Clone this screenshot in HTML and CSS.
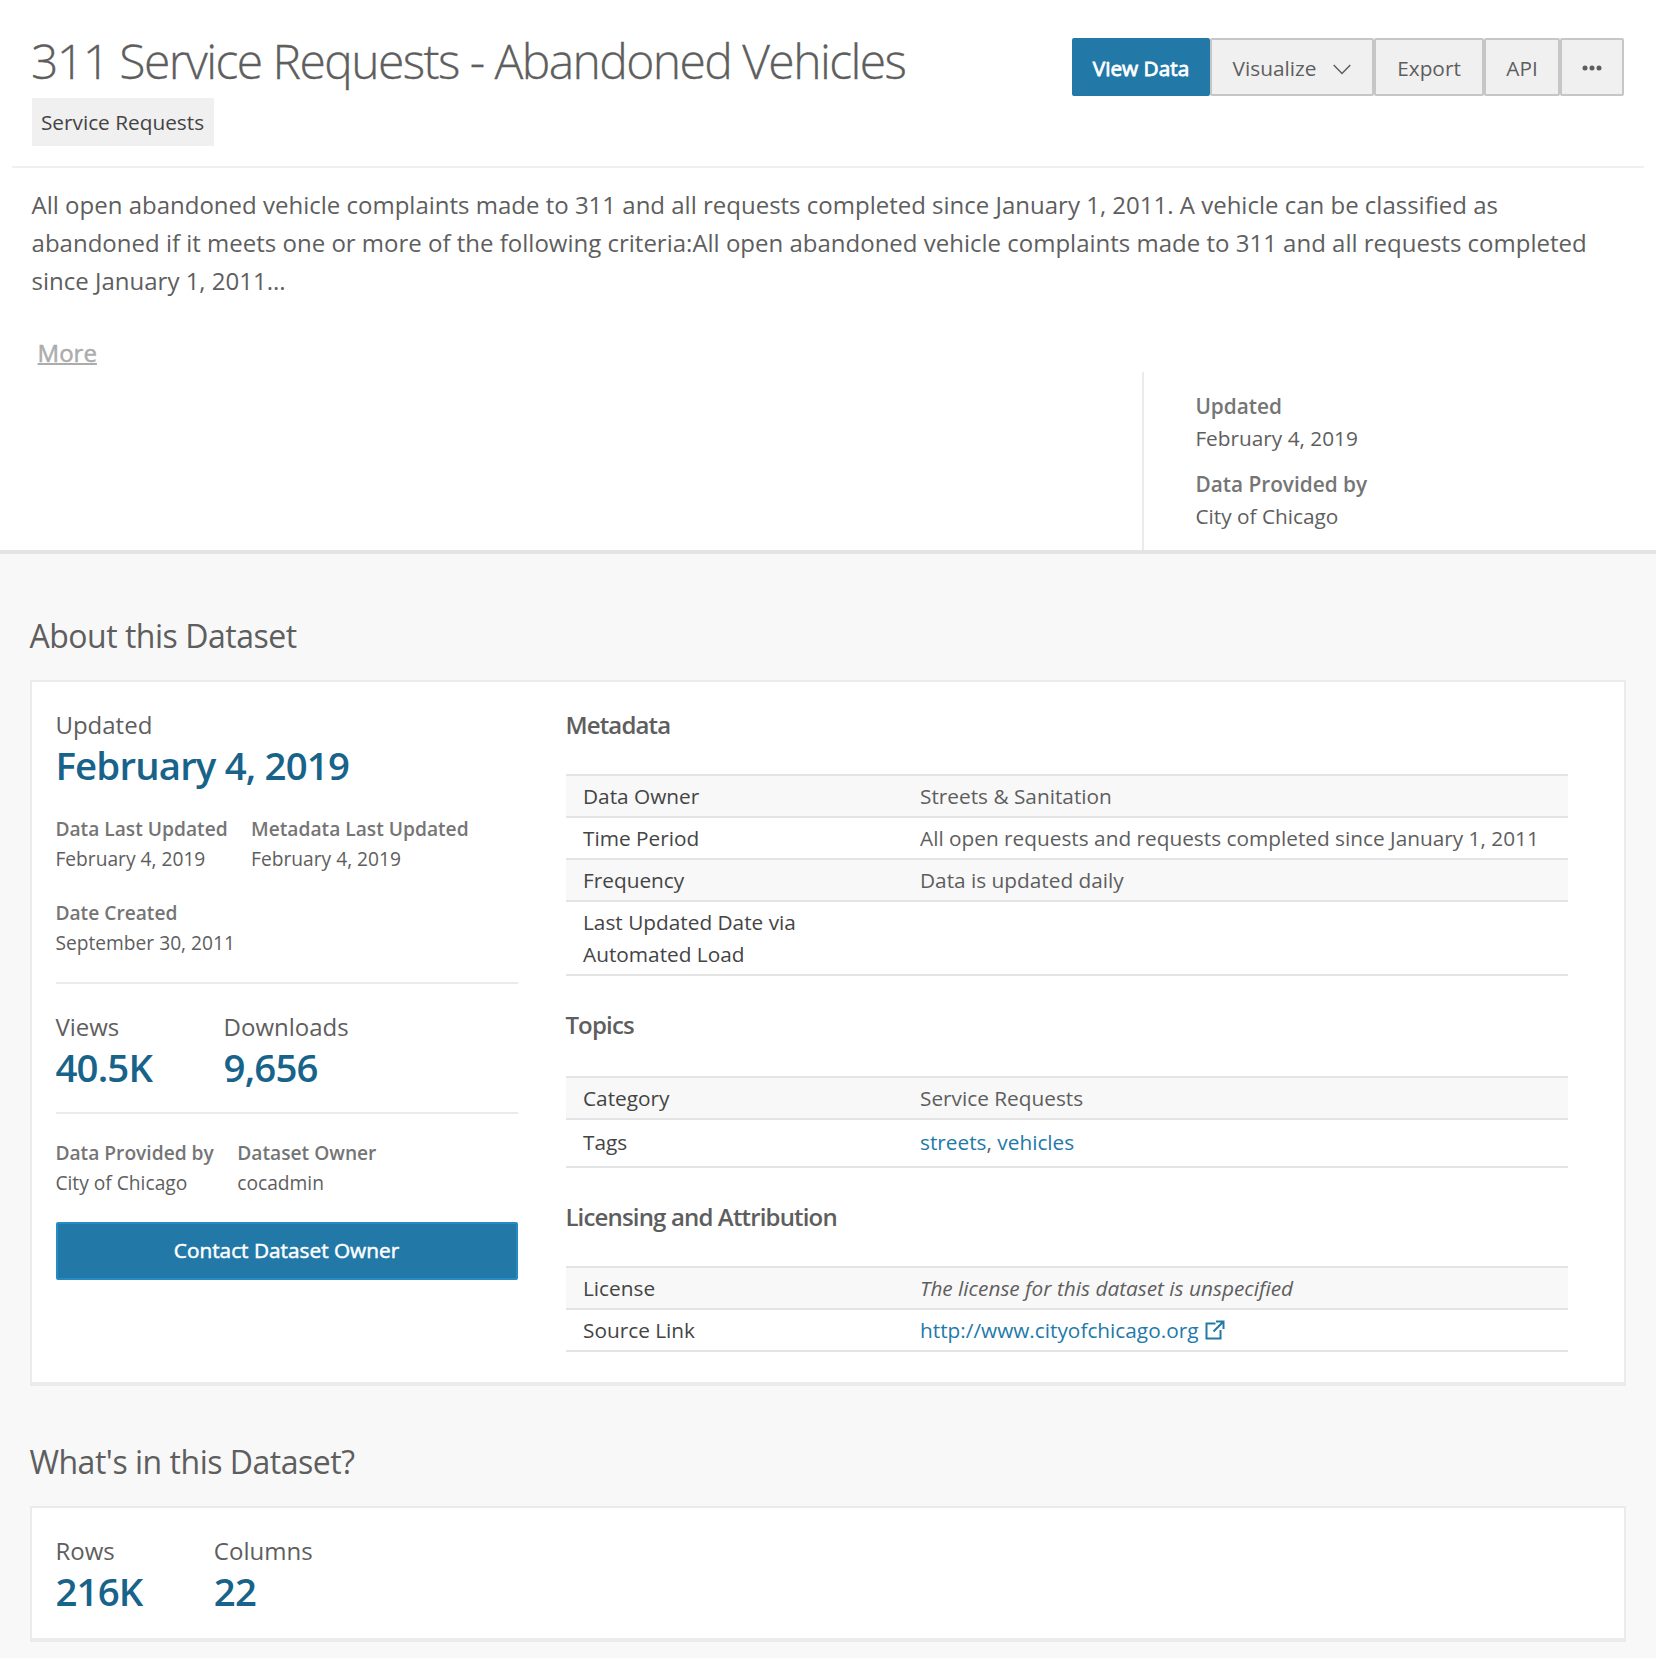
FILE: index.html
```html
<!DOCTYPE html>
<html lang="en">
<head>
<meta charset="utf-8">
<title>311 Service Requests - Abandoned Vehicles</title>
<link rel="stylesheet" href="styles.css">
</head>
<body>
<header class="info-pane">
  <div class="entry-header">
    <div class="entry-title">
      <h1>311 Service Requests - Abandoned Vehicles</h1>
      <span class="category">Service Requests</span>
    </div>
    <div class="btn-group">
      <button class="btn btn-primary btn-view">View Data</button>
      <button class="btn btn-visualize">Visualize
        <svg class="chevron" width="18" height="12" viewBox="0 0 18 12"><path d="M.7 2 9 10.500 17.300 2" fill="none" stroke="#5e5e5e" stroke-width="1.500"/></svg>
      </button>
      <button class="btn btn-export">Export</button>
      <button class="btn btn-api">API</button>
      <button class="btn btn-more" aria-label="More actions">
        <svg width="20" height="6" viewBox="0 0 20 6"><g fill="#5e5e5e"><circle cx="3" cy="3" r="2.5"/><circle cx="10" cy="3" r="2.5"/><circle cx="17" cy="3" r="2.5"/></g></svg>
      </button>
    </div>
  </div>
  <div class="description">
    <p>All open abandoned vehicle complaints made to 311 and all requests completed since January 1, 2011. A vehicle can be classified as abandoned if it meets one or more of the following criteria:All open abandoned vehicle complaints made to 311 and all requests completed since January 1, 2011...</p>
    <a class="more">More</a>
  </div>
  <dl class="entry-meta">
    <dt>Updated</dt>
    <dd>February 4, 2019</dd>
    <dt>Data Provided by</dt>
    <dd>City of Chicago</dd>
  </dl>
</header>

<main class="content">
  <section>
    <h2>About this Dataset</h2>
    <div class="card about">
      <div class="summary">
        <div class="stat">
          <span class="stat-label">Updated</span>
          <span class="stat-value date">February 4, 2019</span>
        </div>
        <div class="details dates">
          <dl><dt>Data Last Updated</dt><dd>February 4, 2019</dd></dl>
          <dl><dt>Metadata Last Updated</dt><dd>February 4, 2019</dd></dl>
          <dl><dt>Date Created</dt><dd>September 30, 2011</dd></dl>
        </div>
        <div class="stats usage">
          <div class="stat">
            <span class="stat-label">Views</span>
            <span class="stat-value">40.5K</span>
          </div>
          <div class="stat">
            <span class="stat-label">Downloads</span>
            <span class="stat-value">9,656</span>
          </div>
        </div>
        <div class="details owners">
          <dl><dt>Data Provided by</dt><dd>City of Chicago</dd></dl>
          <dl><dt>Dataset Owner</dt><dd>cocadmin</dd></dl>
        </div>
        <button class="btn btn-primary btn-contact">Contact Dataset Owner</button>
      </div>
      <div class="tables">
        <h3>Metadata</h3>
        <table>
          <tr><th>Data Owner</th><td>Streets &amp; Sanitation</td></tr>
          <tr><th>Time Period</th><td>All open requests and requests completed since January 1, 2011</td></tr>
          <tr><th>Frequency</th><td>Data is updated daily</td></tr>
          <tr><th>Last Updated Date via Automated Load</th><td></td></tr>
        </table>
        <h3>Topics</h3>
        <table class="topics">
          <tr><th>Category</th><td>Service Requests</td></tr>
          <tr class="tags"><th>Tags</th><td><a>streets</a>, <a>vehicles</a></td></tr>
        </table>
        <h3>Licensing and Attribution</h3>
        <table>
          <tr><th>License</th><td class="unspecified">The license for this dataset is unspecified</td></tr>
          <tr><th>Source Link</th><td><a>http://www.cityofchicago.org <svg class="external" width="20" height="20" viewBox="0 0 20 20"><path d="M10.500 3.500H1.500V18.500H15.500V10M8.500 11.500 18 2" fill="none" stroke="#2279a8" stroke-width="2"/><path d="M11 .5H19.500V9H17.500V4L15.500 2.500H11Z" fill="#2279a8"/></svg></a></td></tr>
        </table>
      </div>
    </div>
  </section>
  <section>
    <h2>What's in this Dataset?</h2>
    <div class="card contents">
      <div class="stats">
        <div class="stat">
          <span class="stat-label">Rows</span>
          <span class="stat-value">216K</span>
        </div>
        <div class="stat">
          <span class="stat-label">Columns</span>
          <span class="stat-value">22</span>
        </div>
      </div>
    </div>
  </section>
</main>
</body>
</html>
```
FILE: styles.css
```css
* { box-sizing: border-box; }

body {
  margin: 0;
  background: #f8f8f8;
  color: #5e5e5e;
  font-family: "Open Sans", "Noto Sans", sans-serif;
  font-size: 20.8px;
  line-height: 32px;
}

h1, h2, h3, p, dl, dd { margin: 0; }

.info-pane {
  height: 554px;
  background: #fff;
  border-bottom: 4px solid #e4e4e4;
}

.entry-header {
  display: flex;
  justify-content: space-between;
  align-items: flex-start;
  height: 168px;
  margin: 0 12px;
  padding: 28px 20px 0 19px;
  border-bottom: 2px solid #f0f0f0;
}

h1 {
  padding-top: 1px;
  font-size: 48px;
  font-weight: 300;
  line-height: 64px;
  letter-spacing: -1.58px;
  -webkit-text-stroke: 0.3px currentColor;
}

.category {
  display: block;
  width: 182px;
  height: 48px;
  margin: 5px 0 0 1px;
  padding-right: 1px;
  background: #f0f0f0;
  color: #444;
  line-height: 48px;
  text-align: center;
}

.btn-group {
  display: flex;
  margin-top: 10px;
}

.btn {
  display: flex;
  align-items: center;
  justify-content: center;
  height: 58px;
  padding: 2px 0 0;
  border: 2px solid #c6c6c6;
  border-radius: 2px;
  background: #f0f0f0;
  color: #5e5e5e;
  font: inherit;
}

.btn-primary {
  border-color: #2279a8;
  background: #2279a8;
  color: #fff;
  -webkit-text-stroke: 0.5px currentColor;
}

.btn-view {
  width: 138px;
  -webkit-text-stroke-width: 0.8px;
}

.btn-visualize { width: 164px; gap: 17px; }
.btn-export { width: 110px; }
.btn-api { width: 76px; }
.btn-more { width: 64px; }

.chevron { margin-top: 2px; }

.description {
  padding: 18px 31px 0 31.6px;
  font-size: 24px;
  line-height: 38px;
}

.more {
  display: block;
  width: fit-content;
  margin: 34px 0 0 6px;
  color: #acacac;
  text-decoration: underline;
  text-decoration-thickness: 2px;
  -webkit-text-stroke: 0.5px currentColor;
}

.entry-meta {
  width: 514px;
  height: 178px;
  margin-left: auto;
  padding: 18px 0 0 51.4px;
  border-left: 2px solid #ebebeb;
}

.entry-meta dd { margin-bottom: 14px; }

dt {
  color: #757575;
  font-weight: 600;
}

.content { padding: 60px 30px 0; }

h2 {
  margin-bottom: 23px;
  padding-top: 1px;
  font-size: 32px;
  font-weight: 400;
  line-height: 42px;
  letter-spacing: -0.48px;
  text-indent: -0.6px;
}

.card {
  border: 2px solid #ebebeb;
  border-bottom-width: 4px;
  background: #fff;
}

.about {
  display: flex;
  gap: 48px;
  height: 706px;
  margin-bottom: 54px;
  padding: 24px;
}

.summary, .contents { text-indent: -0.6px; }

.summary { width: 462px; }

.stat-label {
  display: block;
  font-size: 24px;
  line-height: 38px;
}

.stat-value {
  display: block;
  color: #18638a;
  font-size: 38.4px;
  font-weight: 600;
  line-height: 42px;
  letter-spacing: -0.83px;
}

.details {
  display: flex;
  flex-wrap: wrap;
  column-gap: 24px;
  row-gap: 24px;
  font-size: 19.2px;
  line-height: 30px;
}

.dates {
  margin-top: 28px;
  padding-bottom: 24px;
  border-bottom: 2px solid #ebebeb;
}

.stats { display: flex; gap: 72px; }

.usage {
  height: 130px;
  padding-top: 24px;
  border-bottom: 2px solid #ebebeb;
}

.owners { margin: 24px 0; }

.btn-contact {
  width: 100%;
  padding: 0 1px 2px 0;
  border-color: #258bc2;
}

.tables { width: 1002px; }

h3 {
  font-size: 24px;
  font-weight: 600;
  line-height: 38px;
  letter-spacing: -0.84px;
  text-indent: -0.6px;
}

table {
  width: 100%;
  margin: 30px 0;
  border-collapse: collapse;
  border-spacing: 0;
}

.topics { margin-top: 32px; }

tr {
  border-top: 2px solid #e4e4e4;
  border-bottom: 2px solid #e4e4e4;
}

tr:nth-child(odd) { background: #f8f8f8; }

th {
  width: 337px;
  padding: 4px 80px 4px 17px;
  color: #444;
  font-weight: 400;
  text-align: left;
}

td { padding: 4px 0 4px 17px; }

.tags th, .tags td { padding-top: 6px; padding-bottom: 8px; }

.unspecified { font-style: italic; }

a { color: #2279a8; }

.external {
  margin-left: 1px;
  vertical-align: -2px;
}

.contents {
  height: 136px;
  padding: 24px;
}
```
